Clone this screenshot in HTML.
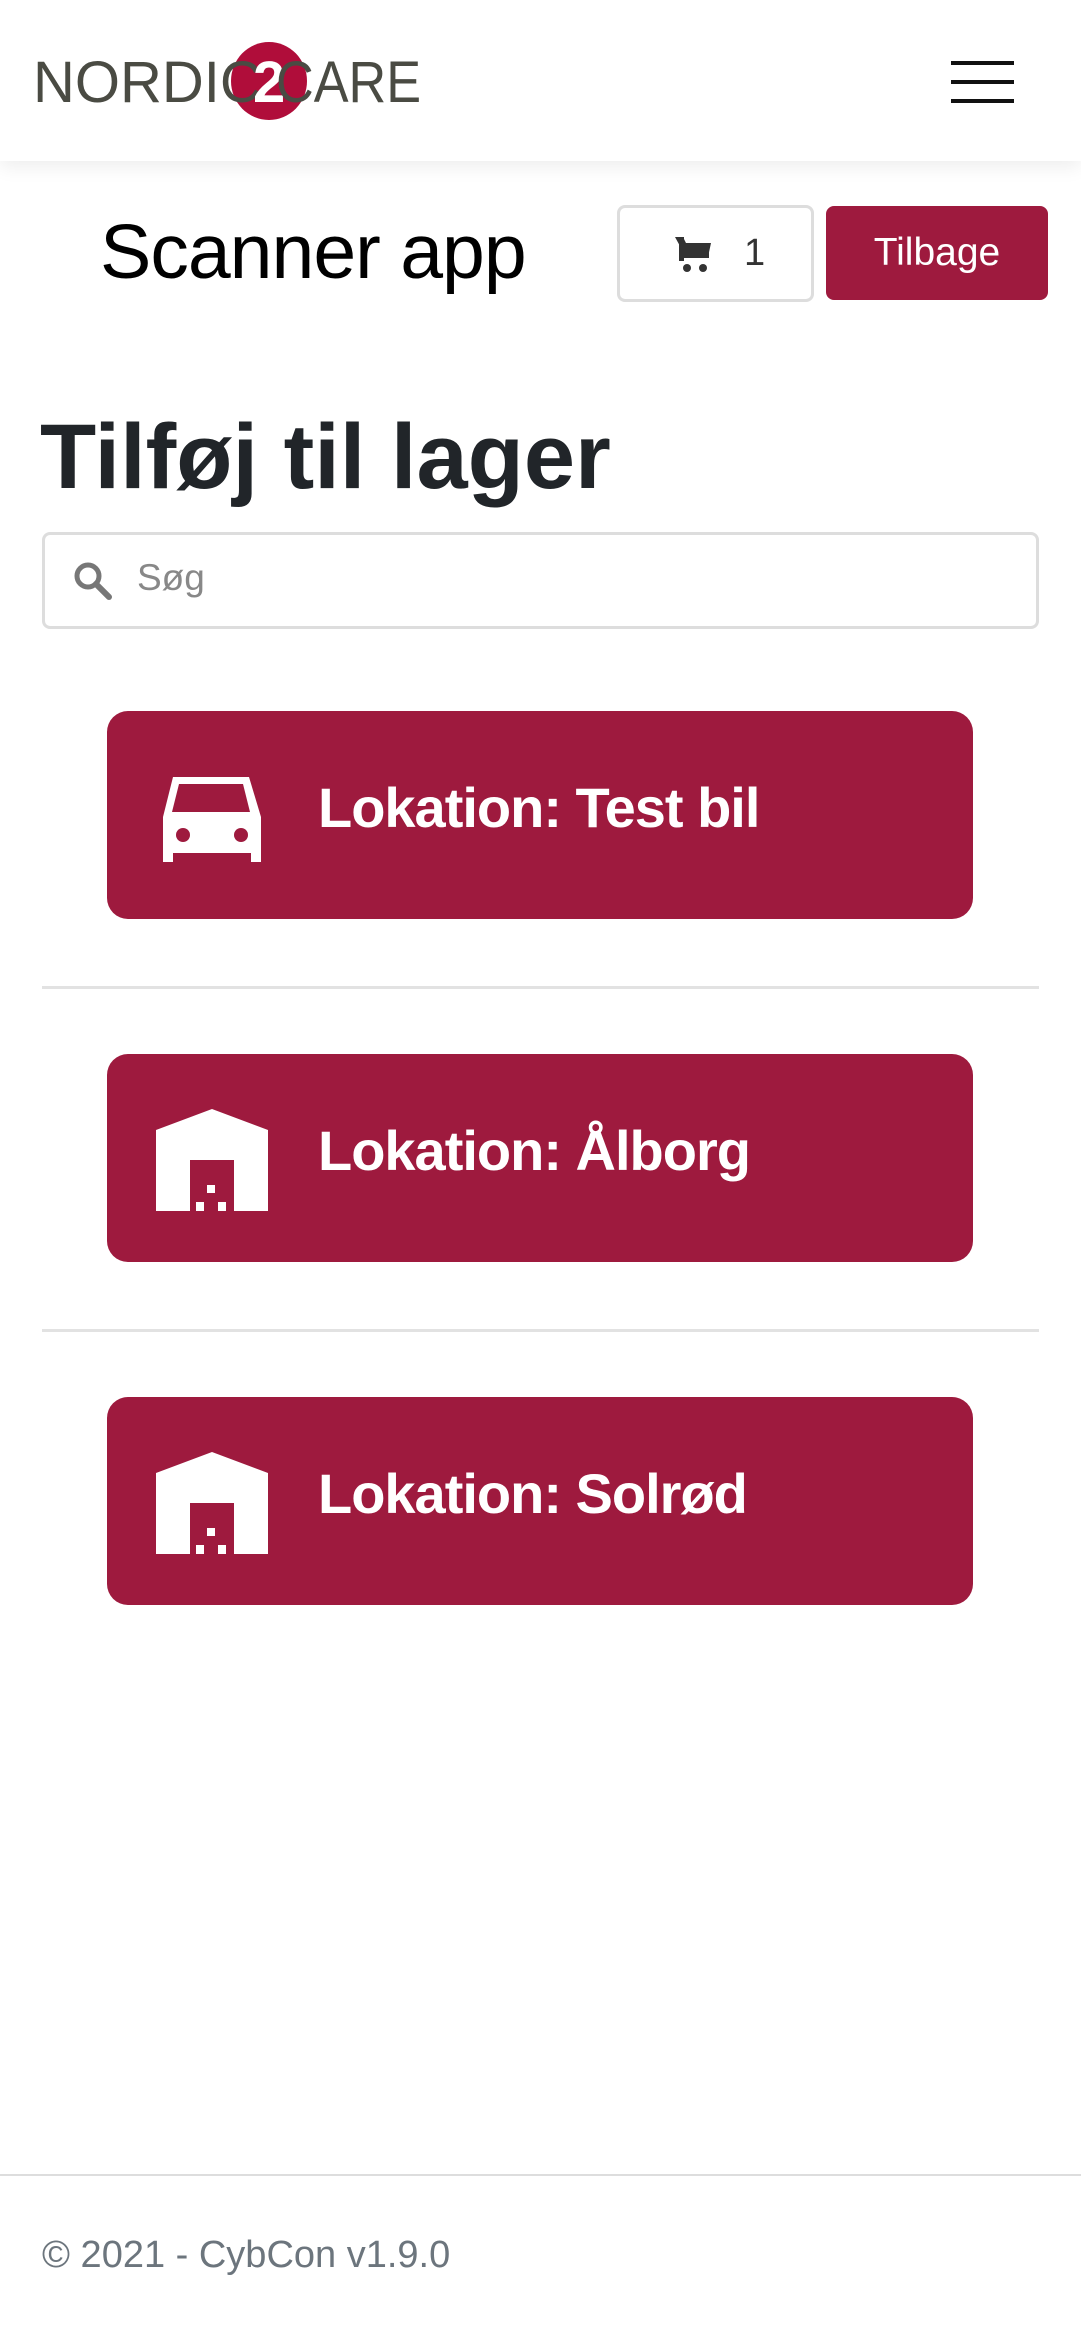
<!DOCTYPE html>
<html><head><meta charset="utf-8"><style>
*{box-sizing:border-box;margin:0;padding:0}
body{width:1081px;height:2340px;background:#fff;font-family:"Liberation Sans",sans-serif;position:relative;overflow:hidden;color:#212529}
.hdr{position:absolute;left:0;top:0;width:1081px;height:161px;background:#fff;box-shadow:0 6px 18px rgba(0,0,0,.07)}
.logo{position:absolute;left:33px;top:42px;height:78px;width:400px}
.circ{position:absolute;left:198px;top:0;width:76px;height:78px;border-radius:50%;background:#b00d3a}
.lt{position:absolute;top:12px;font-size:58px;color:#4a4b43;transform-origin:left;white-space:nowrap;line-height:58px}
.ham{position:absolute;left:951px;width:63px;height:4px;background:#111}
.abs{position:absolute}
.btn{position:absolute;left:107px;width:866px;height:208px;background:#9e1a3e;border-radius:21px;color:#fff}
.btn .t{position:absolute;left:211px;top:-7px;line-height:208px;font-size:56px;font-weight:bold;letter-spacing:-1px}
.btn svg{position:absolute;left:50px;top:60px}
.hr{position:absolute;left:42px;width:997px;height:3px;background:#e2e2e2}
</style></head><body>
<div class="hdr">
 <div class="logo">
  <div class="circ"></div>
  <div class="lt" style="left:0">NORDIC</div>
  <div class="lt" style="left:220px;color:#fff;font-weight:bold">2</div>
  <div class="lt" style="left:243px;transform:scaleX(.9)">CARE</div>
 </div>
 <div class="ham" style="top:61px"></div>
 <div class="ham" style="top:80px"></div>
 <div class="ham" style="top:99px"></div>
</div>
<div class="abs" style="left:100px;top:204px;font-size:77px;color:#000;line-height:96px;letter-spacing:-1px">Scanner app</div>
<div class="abs" style="left:617px;top:205px;width:197px;height:97px;border:3px solid #ddd;border-radius:8px">
 <svg class="abs" style="left:55px;top:29px" width="38" height="36" viewBox="0 0 38 36"><path d="M0 0h8l3 6h25l-3 14H11z M4 0h5v24h-5z" fill="#333"/><rect x="8" y="15" width="26" height="6" fill="#333"/><circle cx="12" cy="31" r="4" fill="#333"/><circle cx="28" cy="31" r="4" fill="#333"/></svg>
 <div class="abs" style="left:124px;top:24px;font-size:38px;color:#333">1</div>
</div>
<div class="abs" style="left:826px;top:206px;width:222px;height:94px;background:#9e1a3e;border-radius:8px;color:#fff;font-size:39px;text-align:center;line-height:94px">Tilbage</div>
<div class="abs" style="left:40px;top:402px;font-size:92px;font-weight:bold;line-height:110px">Tilføj til lager</div>
<div class="abs" style="left:42px;top:532px;width:997px;height:97px;border:3px solid #ddd;border-radius:8px">
 <svg class="abs" style="left:28px;top:26px" width="40" height="40" viewBox="0 0 40 40"><circle cx="15" cy="15" r="11" stroke="#777" stroke-width="5" fill="none"/><path d="M23 23l13 13" stroke="#777" stroke-width="6" stroke-linecap="round"/></svg>
 <div class="abs" style="left:92px;top:22px;font-size:37px;color:#888">Søg</div>
</div>
<div class="btn" style="top:711px">
 <svg width="102" height="90" viewBox="0 0 102 90" style="left:54px;top:64px"><path d="M12 2h76l12 40v45h-10v-9H12v9H2V42z" fill="#fff"/><path d="M18 9h64l7 28H11z" fill="#9e1a3e"/><circle cx="22" cy="60" r="7" fill="#9e1a3e"/><circle cx="80" cy="60" r="7" fill="#9e1a3e"/></svg>
 <div class="t">Lokation: Test bil</div>
</div>
<div class="hr" style="top:986px"></div>
<div class="btn" style="top:1054px">
 <svg width="112" height="102" viewBox="0 0 112 102" style="left:49px;top:55px"><path d="M0 21L56 0l56 21v81H78V51H34v51H0z" fill="#fff"/><rect x="51" y="76" width="8" height="8" fill="#fff"/><rect x="40" y="93" width="8" height="9" fill="#fff"/><rect x="62" y="93" width="8" height="9" fill="#fff"/></svg>
 <div class="t">Lokation: Ålborg</div>
</div>
<div class="hr" style="top:1329px"></div>
<div class="btn" style="top:1397px">
 <svg width="112" height="102" viewBox="0 0 112 102" style="left:49px;top:55px"><path d="M0 21L56 0l56 21v81H78V51H34v51H0z" fill="#fff"/><rect x="51" y="76" width="8" height="8" fill="#fff"/><rect x="40" y="93" width="8" height="9" fill="#fff"/><rect x="62" y="93" width="8" height="9" fill="#fff"/></svg>
 <div class="t">Lokation: Solrød</div>
</div>
<div class="abs" style="left:0;top:2174px;width:1081px;height:2px;background:#ddd"></div>
<div class="abs" style="left:42px;top:2234px;font-size:38px;color:#6c757d">© 2021 - CybCon v1.9.0</div>
</body></html>
